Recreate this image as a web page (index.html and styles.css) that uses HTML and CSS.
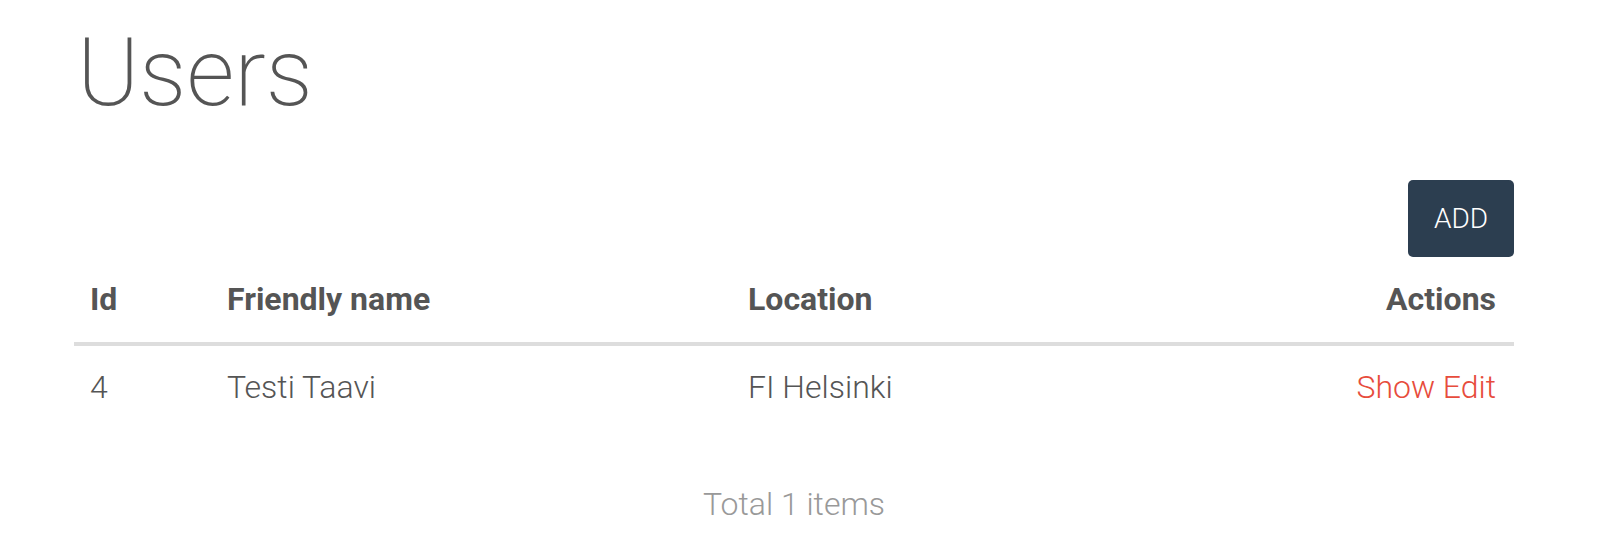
FILE: index.html
```html
<!DOCTYPE html>
<html>
<head>
<meta charset="utf-8">
<link rel="stylesheet" href="styles.css">
</head>
<body>
<div class="container">
  <h1 class="title">Users</h1>
  <div class="toolbar">
    <button class="btn-add">ADD</button>
  </div>
  <table class="users">
    <colgroup>
      <col class="c-id">
      <col class="c-name">
      <col class="c-loc">
      <col class="c-act">
    </colgroup>
    <thead>
      <tr>
        <th>Id</th>
        <th>Friendly name</th>
        <th>Location</th>
        <th class="right">Actions</th>
      </tr>
    </thead>
    <tbody>
      <tr>
        <td>4</td>
        <td>Testi Taavi</td>
        <td>FI Helsinki</td>
        <td class="right"><a class="link" href="#">Show</a> <a class="link" href="#">Edit</a></td>
      </tr>
    </tbody>
  </table>
  <div class="total">Total 1 items</div>
</div>
</body>
</html>
```
FILE: styles.css
```css
html, body {
  margin: 0;
  padding: 0;
  background: #fff;
}
body {
  font-family: Roboto, "Liberation Sans", sans-serif;
  font-weight: 300;
  font-size: 32px;
  color: #555;
}
.container {
  margin-left: 74px;
  width: 1440px;
}
.title {
  margin: 0;
  padding: 23px 0 0 3px;
  font-size: 94px;
  font-weight: 200;
  line-height: 101px;
  color: #555;
}
.toolbar {
  display: flex;
  justify-content: flex-end;
  margin-top: 56px;
}
.btn-add {
  font-family: Roboto, "Liberation Sans", sans-serif;
  font-weight: 300;
  font-size: 28px;
  color: #fff;
  background: #2c3e50;
  border: none;
  border-radius: 5px;
  width: 106px;
  height: 77px;
  padding: 0;
}
.users {
  width: 100%;
  border-collapse: collapse;
  table-layout: fixed;
  margin-top: 1px;
}
.c-id { width: 137px; }
.c-name { width: 521px; }
.c-act { width: 300px; }
.users th, .users td {
  padding: 18px 16px 20px 16px;
  line-height: 46px;
  text-align: left;
}
.users th {
  font-weight: 700;
  border-bottom: 4px solid #ddd;
}
.users .right {
  text-align: right;
  padding-right: 18px;
}
.link {
  color: #e74c3c;
  text-decoration: none;
}
.total {
  text-align: center;
  color: #999;
  margin-top: 51px;
  line-height: 46px;
}
```
